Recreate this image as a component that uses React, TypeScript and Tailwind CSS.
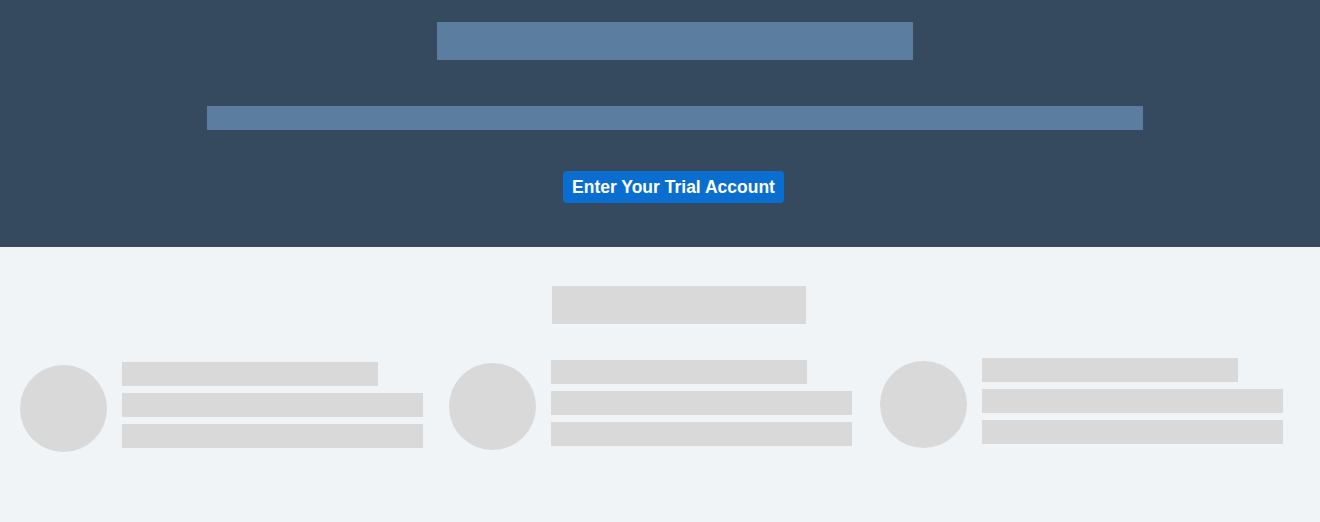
import React from 'react';

const cards = [
  { id: 1, offset: 'ml-[20px] mt-[4px]' },
  { id: 2, offset: 'ml-[26px] mt-[2px]' },
  { id: 3, offset: 'ml-[28px] mt-0' },
];

function SkeletonCard({ offset }: { offset: string }) {
  return (
    <div className={`flex items-center ${offset}`}>
      <div className="w-[87px] h-[87px] rounded-full bg-[#d9d9d9] shrink-0" />
      <div className="ml-[15px] flex flex-col">
        <div className="w-[256px] h-[24px] mb-[7px] bg-[#d9d9d9]" />
        <div className="w-[301px] h-[24px] mb-[7px] bg-[#d9d9d9]" />
        <div className="w-[301px] h-[24px] mb-[7px] bg-[#d9d9d9]" />
      </div>
    </div>
  );
}

export default function App() {
  return (
    <div
      className="min-h-screen w-full bg-[#f1f4f7]"
      style={{ fontFamily: '"Liberation Sans", Arial, sans-serif' }}
    >
      {/* header / hero placeholder */}
      <div className="h-[247px] bg-[#354a5f] pl-[30px] pt-[22px] flex flex-col items-center">
        <div className="w-[476px] h-[38px] bg-[#5b7ea0]" />
        <div className="w-[936px] h-[24px] mt-[46px] bg-[#5b7ea0]" />
        <button className="mt-[41px] mr-[3px] h-[32px] w-[221px] pt-[2px] rounded-[4px] bg-[#0a6ed1] text-white font-bold text-[17.5px] leading-none flex items-center justify-center">
          Enter Your Trial Account
        </button>
      </div>

      {/* content loading skeleton */}
      <div className="pt-[39px] pl-[38px] flex justify-center">
        <div className="w-[254px] h-[38px] bg-[#d9d9d9]" />
      </div>
      <div className="mt-[34px] flex items-start">
        {cards.map((c) => (
          <SkeletonCard key={c.id} offset={c.offset} />
        ))}
      </div>
    </div>
  );
}
